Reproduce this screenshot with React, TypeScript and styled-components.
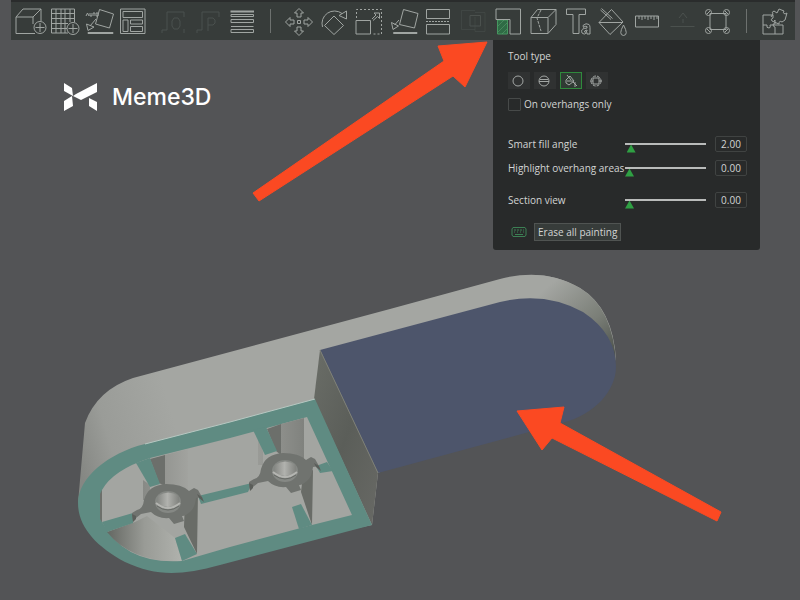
import React, { useState } from "react";
import styled, { createGlobalStyle } from "styled-components";

const GlobalStyle = createGlobalStyle`
  * { box-sizing: border-box; }
  body { margin: 0; background: #535456; }
  button, input { font: inherit; color: inherit; }
`;

const Page = styled.main`
  position: relative;
  min-height: 100vh;
  overflow: hidden;
  background: #535456;
  font-family: "Open Sans", "Liberation Sans", sans-serif;
  font-size: 10px;
  line-height: 16px;
  color: #d3d5d4;
`;

const SceneSvg = styled.svg`
  position: absolute;
  inset: 0;
  width: 100%;
  height: 100%;
`;

const Toolbar = styled.header`
  position: relative;
  display: grid;
  grid-template-columns: minmax(0, 245fr) 24px minmax(0, 452fr) 24px minmax(0, 31fr);
  align-items: center;
  height: 40px;
  margin: 0 5px 0 11px;
  padding: 0 6px 0 2px;
  background: #373c3a;
  border-top: 2px solid #2a2c2c;
`;

const ToolGroup = styled.div`
  display: flex;
`;

const Separator = styled.div`
  justify-self: center;
  width: 1px;
  height: 24px;
  background: #6d716f;
`;

const ToolButton = styled.button<{ $dim?: boolean }>`
  flex: 1;
  min-width: 0;
  display: flex;
  justify-content: center;
  padding: 0;
  border: 0;
  background: none;
  color: ${(p) => (p.$dim ? "#4b514e" : "#a0a5a2")};
  cursor: pointer;
`;

const ToolGlyph = styled.svg`
  flex: none;
  width: 36px;
  height: 36px;
  fill: none;
  stroke: currentColor;
  stroke-width: 1;
`;

const Workspace = styled.div`
  position: relative;
  display: flex;
  justify-content: space-between;
  align-items: flex-start;
  padding: 0 40px 0 64px;
`;

const Brand = styled.div`
  display: flex;
  align-items: center;
  gap: 15px;
  margin-top: 41px;
  font-family: Inter, sans-serif;
  font-size: 23px;
  font-weight: 500;
  line-height: 32px;
  color: #fff;
`;

const BrandMark = styled.svg`
  width: 33px;
  height: 28px;
  fill: #fff;
`;

const Panel = styled.section`
  width: 267px;
  padding: 8px 13px 9px 15px;
  background: #282a2a;
  border-radius: 0 0 3px 3px;
`;

const PanelTitle = styled.h2`
  margin: 0;
  font-size: inherit;
  font-weight: 400;
`;

const ModeRow = styled.div`
  display: flex;
  gap: 4px;
  margin-top: 8px;
`;

const ModeButton = styled.button<{ $active: boolean }>`
  display: flex;
  align-items: center;
  justify-content: center;
  width: 22px;
  height: 17px;
  padding: 0;
  border: 1px solid ${(p) => (p.$active ? "#2f8a3c" : "#303232")};
  background: ${(p) => (p.$active ? "#2f3b33" : "#303232")};
  color: #a3a7a5;
`;

const ModeGlyph = styled.svg`
  width: 14px;
  height: 14px;
  fill: none;
  stroke: currentColor;
`;

const CheckLabel = styled.label`
  display: flex;
  align-items: center;
  gap: 3px;
  margin: 7px 0 24px;
`;

const CheckBox = styled.input`
  appearance: none;
  width: 13px;
  height: 13px;
  margin: 0;
  border: 1px solid #474a49;
  border-radius: 1px;
  &:checked { background: #2fa043; }
`;

const Setting = styled.div<{ $gap: number }>`
  display: grid;
  grid-template-columns: minmax(0, 1fr) 81px 41px;
  align-items: center;
  margin-bottom: ${(p) => p.$gap}px;
  white-space: nowrap;
`;

const Slider = styled.input`
  appearance: none;
  width: 81px;
  height: 16px;
  margin: 0;
  background: linear-gradient(#b9bbba, #b9bbba) 0 7px / 100% 2px no-repeat;
  &::-webkit-slider-thumb {
    appearance: none;
    width: 9px;
    height: 8px;
    margin-top: 9px;
    background: #2fa043;
    clip-path: polygon(50% 0, 100% 100%, 0 100%);
  }
`;

const ValueBox = styled.input`
  justify-self: end;
  width: 32px;
  height: 16px;
  padding: 0;
  border: 1px solid #404342;
  border-radius: 2px;
  background: #282a2a;
  text-align: center;
`;

const PanelFooter = styled.footer`
  display: flex;
  align-items: center;
  gap: 7px;
  padding-left: 3px;
`;

const KeyboardGlyph = styled.svg`
  width: 16px;
  height: 12px;
  fill: none;
  stroke: #3c8054;
`;

const EraseButton = styled.button`
  height: 18px;
  padding: 0 3px;
  border: 1px solid #505452;
  background: #373c3a;
  line-height: 16px;
`;

type Tool = { name: string; dim?: boolean; art: React.ReactNode };

const placingTools: Tool[] = [
  {
    name: "Add object",
    art: (
      <>
        <path d="M4 12.5H-15V-4H2V3M-15-4L-8-12H10L2-4M10-12V0" />
        <circle cx="9" cy="6.5" r="6" />
        <path d="M9 2V11M4.500 6.500H13.500" />
      </>
    ),
  },
  {
    name: "Add plate",
    art: (
      <>
        <path d="M2 12H-14.500V-12H8.500V1M-10-12V12M-5-12V12M-1-12V12M4-12V1M-14.500-7.500H8.500M-14.500-2.500H8.500M-14.500 2.500H2M-14.500 7.500H1" />
        <circle cx="7" cy="7.500" r="6" />
        <path d="M7 3V12M2.500 7.500H11.500" />
      </>
    ),
  },
  {
    name: "Auto orient",
    art: (
      <>
        <path d="M-1.500-11.500L12.500-7L8.500 7L-5.500 3ZM-13 11.500H12V12.500H-13ZM-14.500 3L-13 9.500L-7 6ZM-11 5L-5-2" />
        <path d="M-15-5L-13.500-8L-12-5M-11-8V-5H-9V-8M-8-8H-6M-7-8V-5M-5-8V-5H-3V-8Z" />
      </>
    ),
  },
  {
    name: "Arrange",
    art: <path d="M-15.500-12H9V12.500H-15.500ZM-13-9.500H6.500V-3.500H-13ZM-13-1H-8V10.500H-13ZM-5.500-1H6.500V3H-5.500ZM-5.500 5.500H6.500V10.500H-5.500Z" />,
  },
  {
    name: "Split to objects",
    dim: true,
    art: <path d="M-4-9H13M-4-9V9H-9M-9 12V9M3-3H7L9 0V5L7 8H3L1 5V0ZM13-9V-4M13 8V12" />,
  },
  {
    name: "Split to parts",
    dim: true,
    art: <path d="M-4-9H13M-4-9V9H-9M-9 12V9M2 10V-3H7L9-1V2L7 4H2M13-9V-4" />,
  },
  {
    name: "Variable layer height",
    art: (
      <>
        <path d="M-10.500-9.500H13" strokeWidth="2" />
        <path d="M-10-6.500H12.500V-4.500H-10ZM-10-1.500H12.500V1.500H-10ZM-10 5.500H12.500M-10 8.500H12.500V11.500H-10Z" />
      </>
    ),
  },
];

const editTools: Tool[] = [
  {
    name: "Move",
    art: (
      <>
        <path d="M0-12.500L4.500-8H2V-4H-2V-8H-4.500ZM0 14.500L4.500 10H2V6H-2V10H-4.500ZM-13.500 1L-9-3.500V-1H-5V3H-9V5.500ZM13.500 1L9-3.500V-1H5V3H9V5.500Z" />
        <path d="M-1.500-0.500H1.500V2.500H-1.500Z" />
      </>
    ),
  },
  {
    name: "Rotate",
    art: <path d="M0-5L9.500 4.500L0 13.500L-9.500 4.500ZM-11.500 6A12.500 12.500 0 0 1 8-7.500M5-5.500L12.500-10V-2Z" />,
  },
  {
    name: "Scale",
    art: (
      <>
        <path d="M-13-0.500H1.500V13H-13ZM3-2L7-6L5-8H10.500V-2.500L8.500-4.500L4-0.500" />
        <path d="M-12.500-3V-11.500H12.500V13H4" strokeDasharray="2 2" />
      </>
    ),
  },
  {
    name: "Place on face",
    art: <path d="M-0.500-11.500L14-7.500L10.500 7L-4.500 3.500ZM-10.500 11.500H13V12.500H-10.500ZM-12.500 1.500L-11 8.500L-5.500 5ZM-9.500 4L-5-1" />,
  },
  {
    name: "Cut",
    art: (
      <>
        <path d="M-11.500-11.500H11.500V-2.500H-11.500ZM-11.500 3.500H11.500V13H-11.500Z" />
        <path d="M-12 0.500H12" strokeDasharray="2 1" />
      </>
    ),
  },
  {
    name: "Mesh boolean",
    dim: true,
    art: (
      <>
        <path d="M-3-5.500H7.500V5H-3Z" />
        <path d="M2 8.500H-11.500V-10.500H2M2-8.500H12V10.500H2V-4" strokeWidth="0.500" />
      </>
    ),
  },
  {
    name: "Support painting",
    art: (
      <>
        <path d="M-10.500-1H-0.500V13H-10.500Z" fill="#2f6b45" stroke="#469760" />
        <path d="M-10 5L-4-1M-10 11L-1 2M-6 13L-1 8" stroke="#62a377" strokeWidth="0.500" />
        <path d="M-12-12H12.500V13H2V-1.500H-12Z" />
      </>
    ),
  },
  {
    name: "Seam painting",
    art: (
      <>
        <path d="M-12-3.500H5V12.500H-12ZM-12-3.500L-5.500-11.500H13L5-3.500M13-11.500V3.500L5 12.500" />
        <path d="M-2-11L-6-3L-2 10" strokeDasharray="3 1" />
      </>
    ),
  },
  {
    name: "Text shape",
    art: (
      <>
        <path d="M-11.500-12H7.500V-6.500H1V12.500H-5V-6.500H-11.500Z" />
        <path d="M5 4.500Q8 1.500 11 3.500Q12 4.500 12 6.500V13H9V11.500Q6 14.500 4 12Q2.500 8 6.500 7.500L9 7V5.500Q7 4.500 5.500 6.500ZM9 9Q6 9.500 6.500 11Q8 12 9 10Z" />
      </>
    ),
  },
  {
    name: "Color painting",
    art: <path d="M-13 1.500L-0.500-11.500L11 1L-2 13.500ZM-13 1.500H11M-10.500-12.500L0.500-2.500M-11.500-11L-1-1.500M11.500 4Q6 14 11.500 14.500Q17 14 11.500 4Z" />,
  },
  {
    name: "Measure",
    art: <path d="M-11.500-5H11.500V6H-11.500ZM-8-5V-2M-5-5V-1M-2-5V-2M1-5V-1M4-5V-2M7-5V-1M10-5V-2" />,
  },
  {
    name: "Assembly align",
    dim: true,
    art: <path d="M-11.500 5.500H12.500M1 2V-2M-3-3L1-8L5-3" />,
  },
  {
    name: "Assemble",
    art: (
      <>
        <path d="M-7-7.500H9V8.500H-7Z" />
        <circle cx="-8.500" cy="-8.500" r="3" />
        <circle cx="9.500" cy="-8.500" r="3" />
        <circle cx="-8.500" cy="9.500" r="3" />
        <circle cx="9.500" cy="9.500" r="3" />
        <path d="M-10-7L-7-10M8-10L11-7M-10 8L-7 11M8 11L11 8" />
      </>
    ),
  },
];

const viewTools: Tool[] = [
  {
    name: "Assembly view",
    art: (
      <path d="M-11-6H-1V-3Q-4-2-2 0Q0 2 1-1V3H-1Q-1 6 1 6V13H-11ZM-11 4H-7Q-8 7-5 7Q-3 7-4 4H1M1 4H9V13H1M-3-4L-1-7Q-3-9 0-10L3-8L5-12L10-10Q8-8 11-7L13-8L11-1L8 1Q5-1 5 3L0 1" />
    ),
  },
];

function Tools({ items }: { items: Tool[] }) {
  return (
    <ToolGroup>
      {items.map((t) => (
        <ToolButton key={t.name} type="button" aria-label={t.name} $dim={t.dim}>
          <ToolGlyph viewBox="-18 -18 36 36">{t.art}</ToolGlyph>
        </ToolButton>
      ))}
    </ToolGroup>
  );
}

const modes: { name: string; art: React.ReactNode }[] = [
  { name: "Circle", art: <circle cx="6" cy="7" r="5" /> },
  {
    name: "Sphere",
    art: (
      <>
        <circle cx="6" cy="7" r="5" />
        <path d="M1 7.500H11M2 5.500H10" />
      </>
    ),
  },
  {
    name: "Fill",
    art: <path d="M2 6L6 2L10 7L5 11L2 9ZM3 1L7 6M3 7H9M9 8L13 12M11 8V13" />,
  },
  {
    name: "Gap fill",
    art: (
      <>
        <path d="M3 4H9V10H3Z" />
        <circle cx="6" cy="7" r="5" strokeDasharray="3 1" />
        <path d="M0 7H3M9 7H12" />
      </>
    ),
  },
];

function SliderSetting({ id, label, initial, gap }: { id: string; label: string; initial: number; gap: number }) {
  const [value, setValue] = useState(initial);
  return (
    <Setting $gap={gap}>
      <label htmlFor={id}>{label}</label>
      <Slider id={id} type="range" min={0} max={90} value={value} onChange={(e) => setValue(Number(e.target.value))} />
      <ValueBox
        aria-label={`${label} value`}
        value={value.toFixed(2)}
        onChange={(e) => setValue(Number(e.target.value) || 0)}
      />
    </Setting>
  );
}

function Boss() {
  return (
    <>
      <path
        d="M-24-2Q-20-17-2-18Q14-18 21-11L26-14L30-12L34-5L28-4Q27 5 23 9Q18 14 14 14L16 19L6 22L1 16Q-10 17-17 10L-27 12L-32 16L-35 19L-36 11L-31 8Q-25 7-24-2Z"
        fill="#70736f"
      />
      <path d="M-36 12L-32 14V17L-35 20ZM29-8L34-5L36 0L31-4Z" fill="#5b5e5a" />
      <ellipse cx="0" cy="0" rx="13" ry="11" fill="#858884" />
      <path d="M-10-6Q0-13 11-6V2Q0 8-10 2Z" fill="url(#tube)" />
      <path d="M-12 1Q0 11 12 1" fill="none" stroke="#b4b5b1" strokeWidth="2" />
      <path d="M-11 4Q0 12 11 4" fill="none" stroke="#676a66" strokeWidth="1" />
    </>
  );
}

function Scene() {
  return (
    <SceneSvg viewBox="0 0 800 600" role="img" aria-label="Painted 3D model">
      <defs>
        <linearGradient id="body" gradientUnits="userSpaceOnUse" x1="80" y1="470" x2="180" y2="440">
          <stop offset="0" stopColor="#858783" />
          <stop offset="0.350" stopColor="#9a9c98" />
          <stop offset="1" stopColor="#a4a6a2" />
        </linearGradient>
        <linearGradient id="rim" gradientUnits="userSpaceOnUse" x1="555" y1="280" x2="617" y2="350">
          <stop offset="0" stopColor="#a4a6a2" />
          <stop offset="0.600" stopColor="#7a7e77" />
          <stop offset="1" stopColor="#4f544e" />
        </linearGradient>
        <linearGradient id="wall" x1="0" y1="0" x2="1" y2="1">
          <stop offset="0" stopColor="#6a6d67" />
          <stop offset="0.500" stopColor="#5b5e59" />
          <stop offset="1" stopColor="#686965" />
        </linearGradient>
        <linearGradient id="tube">
          <stop offset="0" stopColor="#888a86" />
          <stop offset="0.450" stopColor="#b1b2ae" />
          <stop offset="1" stopColor="#80827e" />
        </linearGradient>
        <linearGradient id="bowl">
          <stop offset="0" stopColor="#646762" />
          <stop offset="0.500" stopColor="#999b96" />
          <stop offset="1" stopColor="#b0b2ad" />
        </linearGradient>
      </defs>

      <path
        d="M78 503L85 423Q97 390 133 378L390 309L500 279Q545 267 580 288Q613 308 616 360L378 473L372 525L200 560Z"
        fill="url(#body)"
      />
      <path d="M530 275Q558 275 580 288Q613 308 616 363Q600 305 530 298Z" fill="url(#rim)" />
      <path
        d="M320 350L500 302Q545 291 583 312Q616 334 616 367C616 390 595 415 562 423L378 473Z"
        fill="#4d556b"
      />
      <path d="M320 350L314 399L372 525L378 473Z" fill="url(#wall)" />
      <path d="M320 350L378 473" stroke="#7d7f76" strokeWidth="1" />

      <path
        d="M315 399L372 525L220 565C180 576 155 576 125 562C95 546 78 526 78 503C78 478 108 453 145 444L230 422Z"
        fill="#5f8b82"
      />
      <path d="M145 444L230 422L315 399" fill="none" stroke="#b7c8c2" strokeWidth="1" />

      <path
        d="M307 417L352 515L312 525L230 547L182 561Q125 565 102 522L102 490Q113 470 150 458L230 438Z"
        fill="#a3a5a1"
      />
      <path d="M107 532L135 522L147 516L175 538L182 561Q132 563 107 532Z" fill="url(#bowl)" />
      <path d="M102 490V522L100 519V494Z" fill="#6d706b" />

      <path d="M165 455L188 449V491L165 486ZM281 424L304 418V462L281 455ZM143 480L150 485V500H143ZM258 434L263 452V465H258Z" fill="url(#tube)" />
      <path d="M150 459L165 455V486L159 483ZM267 429L281 424V455L276 451Z" fill="#6c6f6b" />
      <path d="M184 527L185 499L198 492L197 554ZM301 492L303 475L313 470L312 525Z" fill="#696c67" />

      <g fill="#5f8b82">
        <path d="M136 463L150 458L160 484L150 487Z" />
        <path d="M102 522L133 513V523L107 532Z" />
        <path d="M175 538L185 534L197 554L182 561Z" />
        <path d="M198 496L252 483L248 492L201 504Z" />
        <path d="M253 430L266 427L277 451L265 455Z" />
        <path d="M316 466L327 462L333 471L320 473Z" />
        <path d="M292 507L301 504L312 525L299 529Z" />
      </g>
      <g transform="translate(168 502)"><Boss /></g>
      <g transform="translate(285 471)"><Boss /></g>

      <g fill="#fb4922" stroke="#fb4922" strokeWidth="1" strokeLinejoin="round">
        <path d="M487 42L438 46L444 61L253 193L259 201L453 76L465 87Z" />
        <path d="M517 411L564 407L560 423L721 512L717 521L552 438L542 450Z" />
      </g>
    </SceneSvg>
  );
}

export default function App() {
  const [mode, setMode] = useState("Fill");
  const [overhangs, setOverhangs] = useState(false);
  return (
    <Page>
      <GlobalStyle />
      <Scene />
      <Toolbar>
        <Tools items={placingTools} />
        <Separator />
        <Tools items={editTools} />
        <Separator />
        <Tools items={viewTools} />
      </Toolbar>
      <Workspace>
        <Brand>
          <BrandMark viewBox="0 0 33 28">
            <path d="M0 0L8 5L9 13L0 8ZM33 0V9L17 17L9 13L12 11ZM0 18L8 13L9 23L0 28ZM25 15L33 19V28L25 23Z" />
          </BrandMark>
          <span>Meme3D</span>
        </Brand>
        <Panel>
          <PanelTitle>Tool type</PanelTitle>
          <ModeRow>
            {modes.map((m) => (
              <ModeButton
                key={m.name}
                type="button"
                aria-label={m.name}
                aria-pressed={mode === m.name}
                $active={mode === m.name}
                onClick={() => setMode(m.name)}
              >
                <ModeGlyph viewBox="0 0 14 14">{m.art}</ModeGlyph>
              </ModeButton>
            ))}
          </ModeRow>
          <CheckLabel>
            <CheckBox type="checkbox" checked={overhangs} onChange={(e) => setOverhangs(e.target.checked)} />
            On overhangs only
          </CheckLabel>
          <SliderSetting id="fill-angle" label="Smart fill angle" initial={2} gap={8} />
          <SliderSetting id="overhang-areas" label="Highlight overhang areas" initial={0} gap={16} />
          <SliderSetting id="section-view" label="Section view" initial={0} gap={15} />
          <PanelFooter>
            <KeyboardGlyph viewBox="0 0 16 12">
              <path d="M2 1.500H14L15 3V9L14 10.500H2L1 9V3ZM3 4H5M6 4H8M9 4H11M12 4H13M3 6H4M6 6H7M9 6H10M12 6H13M4 8.500H12" />
            </KeyboardGlyph>
            <EraseButton type="button">Erase all painting</EraseButton>
          </PanelFooter>
        </Panel>
      </Workspace>
    </Page>
  );
}
